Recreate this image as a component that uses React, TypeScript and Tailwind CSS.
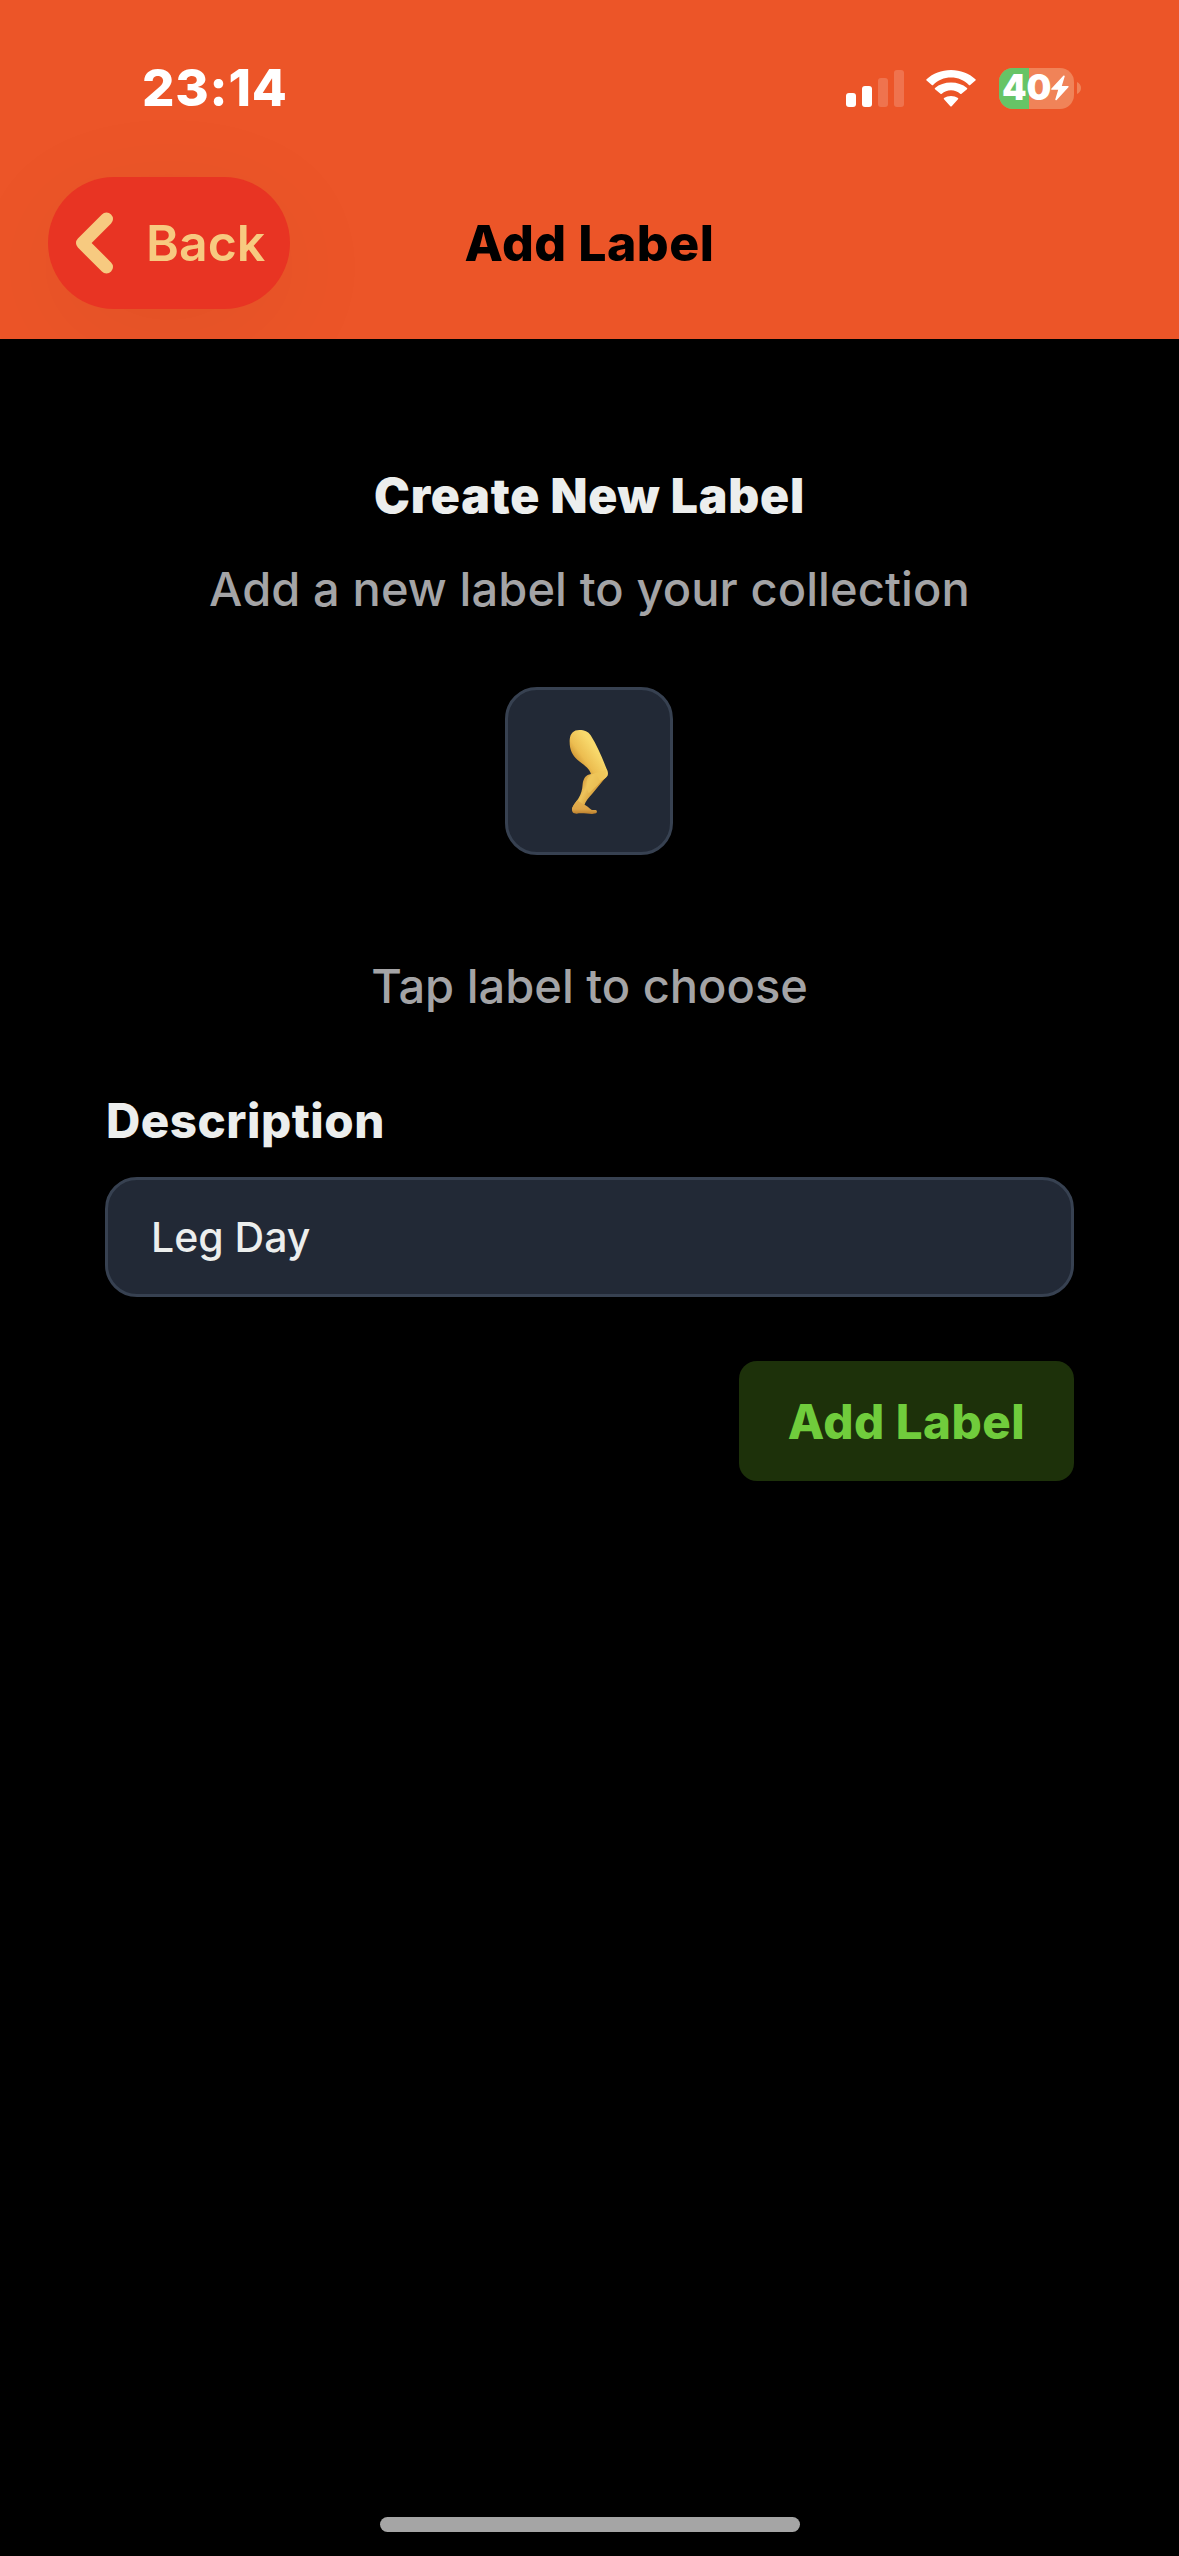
import { useState } from "react";

function SignalIcon() {
  return (
    <svg width="58" height="37" viewBox="0 0 58 37" fill="white">
      <rect x="0" y="23" width="10" height="14" rx="3" />
      <rect x="16" y="16" width="10" height="21" rx="3" />
      <rect x="32" y="8" width="10" height="29" rx="3" opacity="0.18" />
      <rect x="48" y="0" width="10" height="37" rx="3" opacity="0.18" />
    </svg>
  );
}

function WifiIcon() {
  return (
    <svg width="50" height="37" viewBox="0 0 50 37" fill="white">
      <path d="M25 7.6c6.9 0 13.2 2.7 17.9 7.3.4.4.9.4 1.3 0l5.2-4.3c.5-.4.5-1 0-1.4C43.1 3.5 34.5 0 25 0S6.9 3.5.6 9.2c-.5.4-.5 1 0 1.4l5.2 4.3c.4.4.9.4 1.3 0C11.8 10.3 18.1 7.6 25 7.6z" />
      <path d="M25 20.3c3.5 0 6.7 1.3 9.2 3.5.4.4.9.4 1.3 0l5.5-4.5c.4-.4.4-.9 0-1.3C36.7 14.6 31.1 12.6 25 12.6S13.3 14.6 9 18c-.4.4-.4.9 0 1.3l5.5 4.5c.4.4.9.4 1.3 0 2.5-2.2 5.7-3.5 9.2-3.5z" />
      <path d="M32 29.3c.4-.4.4-.9 0-1.3-2-1.4-4.4-2.1-7-2.1s-5 .7-7 2.1c-.4.4-.4.9 0 1.3l6.3 6.9c.4.4 1 .4 1.4 0z" />
    </svg>
  );
}

function Battery({ level }: { level: number }) {
  return (
    <div className="flex items-center">
      <div className="relative h-[41px] w-[75px] overflow-hidden rounded-[14px] bg-[#f08358]">
        <div className="absolute inset-y-0 left-0 bg-[#66c466]" style={{ width: `${level}%` }} />
        <div className="relative flex h-full items-center pb-px pl-[3px]">
          <span className="text-[35px] leading-none font-black">{level}</span>
          <svg className="mt-px" width="18" height="26" viewBox="0 0 18 25" fill="white">
            <path d="M12.3.3.5 13c-.6.7-.3 1.3.5 1.3h6.2L4.3 23.7c-.3 1 .7 1.5 1.4.8L17.4 11.8c.6-.7.3-1.3-.5-1.3h-6.1L13.7 1.1c.3-1-.7-1.5-1.4-.8z" />
          </svg>
        </div>
      </div>
      <svg className="ml-[3px]" width="4" height="12" viewBox="0 0 4 12" fill="#f08358">
        <path d="M0 0c2.5 1 4 3.4 4 6s-1.500 5-4 6z" />
      </svg>
    </div>
  );
}

function LegEmoji() {
  return (
    <svg width="42" height="90" viewBox="234 168 126 270">
      <defs>
        <linearGradient id="thigh" gradientUnits="userSpaceOnUse" x1="250" y1="262" x2="305" y2="222">
          <stop offset="0" stopColor="#cf9535" />
          <stop offset="0.35" stopColor="#ecbd50" />
          <stop offset="1" stopColor="#f8d96c" />
        </linearGradient>
        <linearGradient id="calf" gradientUnits="userSpaceOnUse" x1="268" y1="345" x2="318" y2="372">
          <stop offset="0" stopColor="#d39a3b" />
          <stop offset="0.4" stopColor="#eec45c" />
          <stop offset="1" stopColor="#d49a38" />
        </linearGradient>
        <linearGradient id="foot" x1="0" y1="0" x2="0" y2="1">
          <stop offset="0" stopColor="#e3b04e" />
          <stop offset="0.65" stopColor="#dda447" />
          <stop offset="1" stopColor="#b97d2c" />
        </linearGradient>
      </defs>
      <path
        fill="url(#calf)"
        d="M303 312C288 314 280 325 278 342C277 360 273 372 266 384C259 396 251 404 247 414L282 408C286 394 296 384 308 370L353 315L330 296Z"
      />
      <path
        fill="url(#foot)"
        d="M262 390C256 398 249 406 246 415C245 427 250 431 260 431C276 428 292 432 306 432L318 430C322 428 322 421 317 420C312 420 308 421 304 419C296 414 291 407 281 403C274 400 270 396 262 390Z"
      />
      <path
        fill="url(#thigh)"
        d="M268 180C251 180 240 190 239 210C238 240 247 255 262 269C280 284 298 294 303 312C318 311 323 318 328 330C336 334 345 327 352 318C356 310 353 303 349 295C338 266 322 228 302 196C294 184 284 180 268 180Z"
      />
      <path fill="#efc75b" d="M298 318C306 309 325 308 348 300C350 312 341 325 329 338C318 350 306 360 296 370C288 350 286 330 298 318Z" opacity="0.75" />
    </svg>
  );
}

export default function App() {
  const [description, setDescription] = useState("Leg Day");

  return (
    <div className="flex h-[2556px] w-[1179px] flex-col bg-black font-['Inter',sans-serif]">
      <header className="h-[339px] overflow-hidden bg-[#ec5528]">
        <div className="flex h-[176px] items-center justify-between pr-[98px] pl-[142px] text-white">
          <span className="pb-px text-[51px] leading-none font-extrabold tracking-[0.8px]">23:14</span>
          <div className="flex items-center">
            <SignalIcon />
            <div className="ml-[22px]">
              <WifiIcon />
            </div>
            <div className="ml-[23px]">
              <Battery level={40} />
            </div>
          </div>
        </div>
        <div className="grid grid-cols-[1fr_auto_1fr] items-center px-12 pt-px">
          <button className="flex h-[132px] w-[242px] items-center rounded-[66px] bg-[#e83423] pl-[27px] text-[#f7ca80] shadow-[0_24px_120px_rgba(0,0,0,0.05)]">
            <svg width="40" height="64" viewBox="0 0 40 64" fill="none" stroke="currentColor" strokeWidth="13" strokeLinecap="round" strokeLinejoin="round">
              <path d="M31.5 8L7.5 32L31.5 56" />
            </svg>
            <span className="ml-[31px] text-[50px] leading-none font-semibold">Back</span>
          </button>
          <h1 className="text-[50px] leading-none font-extrabold tracking-[0.5px]">Add Label</h1>
        </div>
      </header>

      <main className="flex flex-1 flex-col px-[105px] pt-[127px]">
        <div className="text-center">
          <h2 className="text-[48px] leading-[60px] font-black tracking-[0.8px] text-[#eceeed]">Create New Label</h2>
          <p className="mt-[33px] text-[47px] leading-[60px] font-medium tracking-[0.1px] text-[#a4a4a6]">
            Add a new label to your collection
          </p>
        </div>
        <button className="mt-[68px] mr-px flex size-[168px] items-center justify-center self-center rounded-[32px] border-3 border-[#374151] bg-[#222936]">
          <LegEmoji />
        </button>
        <p className="mt-[101px] text-center text-[47px] leading-[60px] font-medium text-[#a4a4a6]">
          Tap label to choose
        </p>
        <label htmlFor="description" className="mt-[75px] pl-px text-[47.5px] leading-[60px] font-extrabold tracking-[0.5px] text-[#eceeed]">
          Description
        </label>
        <input
          id="description"
          value={description}
          onChange={(e) => setDescription(e.target.value)}
          className="mt-[26px] h-[120px] rounded-[32px] border-3 border-[#374151] bg-[#222936] px-[43px] text-[41px] font-medium text-[#eceeed] outline-none"
        />
        <button className="mt-16 flex h-[120px] w-[335px] items-center justify-center self-end rounded-[18px] bg-[#1d310a] pt-px text-[47.5px] leading-none font-extrabold tracking-[0.5px] text-[#70cc3c]">
          Add Label
        </button>
      </main>

      <div className="mb-6 h-[15px] w-[420px] self-center rounded-full bg-[#a5a5a5]" />
    </div>
  );
}
